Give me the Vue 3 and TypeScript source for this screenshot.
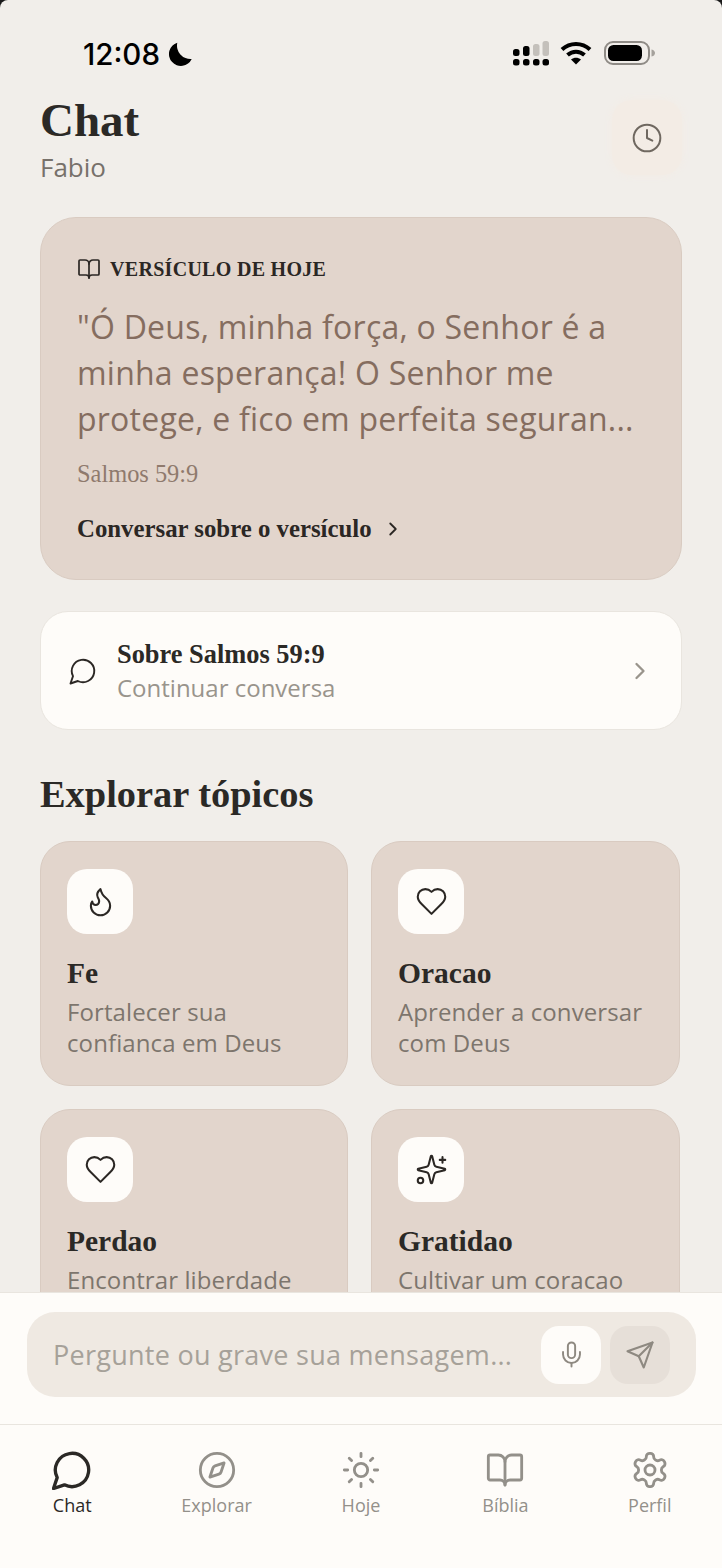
<script setup lang="ts">
interface Topic {
  title: string;
  desc: string;
  icon: "flame" | "heart" | "sparkles";
}

const topics: Topic[] = [
  { title: "Fe", desc: "Fortalecer sua confianca em Deus", icon: "flame" },
  { title: "Oracao", desc: "Aprender a conversar com Deus", icon: "heart" },
  { title: "Perdao", desc: "Encontrar liberdade no perdao", icon: "heart" },
  { title: "Gratidao", desc: "Cultivar um coracao agradecido", icon: "sparkles" },
];

const navItems = [
  { label: "Chat", icon: "chat", active: true },
  { label: "Explorar", icon: "compass", active: false },
  { label: "Hoje", icon: "sun", active: false },
  { label: "Bíblia", icon: "book", active: false },
  { label: "Perfil", icon: "gear", active: false },
];
</script>

<template>
  <div class="phone">
    <header class="status">
      <div class="time">
        <span>12:08</span>
        <svg class="moon" viewBox="0 0 24 24"><path d="M9.5 1.5A11 11 0 1 0 22.8 16.6 12.5 12.5 0 0 1 9.500 1.500Z" fill="#000" /></svg>
      </div>
      <div class="status-right">
        <svg width="36" height="25" viewBox="0 0 36 25">
          <g fill="#000">
            <rect x="0" y="8" width="6.500" height="7" rx="2.500" />
            <rect x="10" y="5" width="6.500" height="10" rx="2.500" />
            <rect x="0" y="18" width="6.500" height="6.500" rx="2.500" />
            <rect x="10" y="18" width="6.500" height="6.500" rx="2.500" />
            <rect x="20" y="18" width="6.500" height="6.500" rx="2.500" />
            <rect x="29.500" y="18" width="6.500" height="6.500" rx="2.500" />
          </g>
          <g fill="#c4c0bb">
            <rect x="20" y="3" width="6.500" height="12" rx="2.500" />
            <rect x="29.500" y="0" width="6.500" height="15" rx="2.500" />
          </g>
        </svg>
        <svg class="wifi" width="32" height="24" viewBox="0 0 32 24" fill="none" stroke="#000" stroke-width="4">
          <path d="M2 8.500C10 1 22 1 30 8.500" />
          <path d="M7.500 14C12.500 9.500 19.500 9.500 24.500 14" />
          <path d="M16 23.500 11 18.500C14 16 18 16 21 18.500Z" fill="#000" stroke="none" />
        </svg>
        <svg width="51" height="24" viewBox="0 0 51 24">
          <rect x="1" y="1" width="44" height="22" rx="8" fill="none" stroke="#8f8b86" stroke-width="2" />
          <rect x="4" y="4" width="34" height="16" rx="5.500" fill="#000" />
          <path d="M47.500 8.500C50 9 51 10.500 51 12S50 15 47.500 15.500Z" fill="#a5a19c" />
        </svg>
      </div>
    </header>

    <main class="content">
      <section class="title-row">
        <div>
          <h1>Chat</h1>
          <p class="user">Fabio</p>
        </div>
        <button class="history" type="button" aria-label="Histórico">
          <svg width="32" height="32" viewBox="0 0 24 24" fill="none" stroke="#6f6860" stroke-width="1.500" stroke-linecap="round" stroke-linejoin="round">
            <circle cx="12" cy="12" r="10" />
            <path d="M12 6v6l4 2" />
          </svg>
        </button>
      </section>

      <section class="verse">
        <div class="verse-label">
          <svg width="24" height="24" viewBox="0 0 24 24" fill="none" stroke="#2b2724" stroke-width="1.700" stroke-linecap="round" stroke-linejoin="round">
            <path d="M12 7v14" />
            <path d="M3 18a1 1 0 0 1-1-1V4a1 1 0 0 1 1-1h5a4 4 0 0 1 4 4 4 4 0 0 1 4-4h5a1 1 0 0 1 1 1v13a1 1 0 0 1-1 1h-6a3 3 0 0 0-3 3 3 3 0 0 0-3-3z" />
          </svg>
          <span>VERSÍCULO DE HOJE</span>
        </div>
        <p class="quote">"Ó Deus, minha força, o Senhor é a minha esperança! O Senhor me protege, e fico em perfeita seguran...</p>
        <p class="reference">Salmos 59:9</p>
        <a class="verse-link">
          <span>Conversar sobre o versículo</span>
          <svg width="22" height="22" viewBox="0 0 24 24" fill="none" stroke="#2b2724" stroke-width="2" stroke-linecap="round" stroke-linejoin="round"><path d="m9 18 6-6-6-6" /></svg>
        </a>
      </section>

      <section class="resume">
        <svg width="30" height="30" viewBox="0 0 24 24" fill="none" stroke="#2b2724" stroke-width="1.500" stroke-linecap="round" stroke-linejoin="round">
          <path d="M7.900 20A9 9 0 1 0 4 16.100L2 22Z" />
        </svg>
        <div class="resume-text">
          <strong>Sobre Salmos 59:9</strong>
          <span>Continuar conversa</span>
        </div>
        <svg width="28" height="28" viewBox="0 0 24 24" fill="none" stroke="#99948c" stroke-width="2" stroke-linecap="round" stroke-linejoin="round"><path d="m9 18 6-6-6-6" /></svg>
      </section>

      <h2>Explorar tópicos</h2>
      <section class="topics">
        <article v-for="topic in topics" :key="topic.title" class="topic">
          <div class="topic-icon">
            <svg width="33" height="33" viewBox="0 0 24 24" fill="none" stroke="#2b2724" stroke-width="1.500" stroke-linecap="round" stroke-linejoin="round">
              <path v-if="topic.icon === 'flame'" d="M8.500 14.500A2.500 2.500 0 0 0 11 12c0-1.380-.5-2-1-3-1.072-2.143-.224-4.054 2-6 .5 2.500 2 4.900 4 6.500 2 1.600 3 3.500 3 5.500a7 7 0 1 1-14 0c0-1.153.433-2.294 1-3a2.500 2.500 0 0 0 2.500 2.500z" />
              <path v-else-if="topic.icon === 'heart'" d="M19 14c1.490-1.460 3-3.210 3-5.500A5.500 5.500 0 0 0 16.500 3c-1.760 0-3 .5-4.500 2-1.500-1.500-2.740-2-4.500-2A5.500 5.500 0 0 0 2 8.500c0 2.300 1.500 4.050 3 5.500l7 7Z" />
              <template v-else>
                <path d="M9.937 15.500A2 2 0 0 0 8.500 14.063l-6.135-1.582a.5.5 0 0 1 0-.962L8.500 9.936A2 2 0 0 0 9.937 8.500l1.582-6.135a.5.5 0 0 1 .963 0L14.063 8.500A2 2 0 0 0 15.500 9.937l6.135 1.581a.5.5 0 0 1 0 .964L15.500 14.063a2 2 0 0 0-1.437 1.437l-1.582 6.135a.5.5 0 0 1-.963 0z" />
                <path d="M20 3v4M22 5h-4" />
                <circle cx="4" cy="20" r="2" />
              </template>
            </svg>
          </div>
          <h3>{{ topic.title }}</h3>
          <p>{{ topic.desc }}</p>
        </article>
      </section>
    </main>

    <section class="composer">
      <div class="composer-box">
        <span class="placeholder">Pergunte ou grave sua mensagem...</span>
        <button class="mic" type="button" aria-label="Gravar">
          <svg width="29" height="29" viewBox="0 0 24 24" fill="none" stroke="#8e8981" stroke-width="1.600" stroke-linecap="round" stroke-linejoin="round">
            <path d="M12 2a3 3 0 0 0-3 3v7a3 3 0 0 0 6 0V5a3 3 0 0 0-3-3Z" />
            <path d="M19 10v2a7 7 0 0 1-14 0v-2" />
            <path d="M12 19v3" />
          </svg>
        </button>
        <button class="send" type="button" aria-label="Enviar">
          <svg width="30" height="30" viewBox="0 0 24 24" fill="none" stroke="#8e8981" stroke-width="1.700" stroke-linecap="round" stroke-linejoin="round">
            <path d="m22 2-7 20-4-9-9-4Z" />
            <path d="M22 2 11 13" />
          </svg>
        </button>
      </div>
    </section>

    <nav class="tabs">
      <div v-for="item in navItems" :key="item.label" class="tab" :class="{ active: item.active }">
        <svg width="40" height="40" :viewBox="item.icon === 'chat' ? '1.200 1.200 21.600 21.600' : '0 0 24 24'" fill="none" stroke="currentColor" :stroke-width="item.active ? 1.800 : 1.700" stroke-linecap="round" stroke-linejoin="round">
          <path v-if="item.icon === 'chat'" d="M7.900 20A9 9 0 1 0 4 16.100L2 22Z" />
          <template v-else-if="item.icon === 'compass'">
            <circle cx="12" cy="12" r="10" />
            <path d="m16.240 7.760-1.804 5.411a2 2 0 0 1-1.265 1.265L7.760 16.240l1.804-5.411a2 2 0 0 1 1.265-1.265z" />
          </template>
          <template v-else-if="item.icon === 'sun'">
            <circle cx="12" cy="12" r="4" />
            <path d="M12 2v2M12 20v2M4.930 4.930l1.410 1.410M17.660 17.660l1.410 1.410M2 12h2M20 12h2M6.340 17.660l-1.410 1.410M19.070 4.930l-1.410 1.410" />
          </template>
          <template v-else-if="item.icon === 'book'">
            <path d="M12 7v14" />
            <path d="M3 18a1 1 0 0 1-1-1V4a1 1 0 0 1 1-1h5a4 4 0 0 1 4 4 4 4 0 0 1 4-4h5a1 1 0 0 1 1 1v13a1 1 0 0 1-1 1h-6a3 3 0 0 0-3 3 3 3 0 0 0-3-3z" />
          </template>
          <template v-else>
            <path d="M12.220 2h-.44a2 2 0 0 0-2 2v.18a2 2 0 0 1-1 1.730l-.43.25a2 2 0 0 1-2 0l-.15-.08a2 2 0 0 0-2.730.73l-.22.38a2 2 0 0 0 .73 2.730l.15.1a2 2 0 0 1 1 1.720v.51a2 2 0 0 1-1 1.740l-.15.09a2 2 0 0 0-.73 2.730l.22.38a2 2 0 0 0 2.730.73l.15-.08a2 2 0 0 1 2 0l.43.25a2 2 0 0 1 1 1.730V20a2 2 0 0 0 2 2h.44a2 2 0 0 0 2-2v-.18a2 2 0 0 1 1-1.730l.43-.25a2 2 0 0 1 2 0l.15.08a2 2 0 0 0 2.730-.73l.22-.39a2 2 0 0 0-.73-2.730l-.15-.08a2 2 0 0 1-1-1.740v-.5a2 2 0 0 1 1-1.740l.15-.09a2 2 0 0 0 .73-2.730l-.22-.38a2 2 0 0 0-2.730-.73l-.15.08a2 2 0 0 1-2 0l-.43-.25a2 2 0 0 1-1-1.730V4a2 2 0 0 0-2-2z" />
            <circle cx="12" cy="12" r="3" />
          </template>
        </svg>
        <span>{{ item.label }}</span>
      </div>
    </nav>
  </div>
</template>

<style>
html,
body {
  background: #1a1a1a;
}
</style>

<style scoped>
.phone {
  width: 722px;
  height: 1568px;
  display: flex;
  flex-direction: column;
  overflow: hidden;
  border-radius: 8px 8px 0 0;
  background: #f1eeea;
  color: #2b2926;
  font-family: "Open Sans", "Noto Sans", sans-serif;
}

.status {
  height: 90px;
  flex: none;
  box-sizing: border-box;
  display: flex;
  justify-content: space-between;
  padding: 38px 67px 0 83px;
}

.time {
  display: flex;
  align-items: flex-start;
  gap: 7px;
  font-family: Inter, sans-serif;
  font-size: 29.500px;
  line-height: 32px;
  font-weight: 500;
  color: #000;
}

.moon {
  width: 26px;
  height: 26px;
  margin-top: 3px;
}

.status-right {
  display: flex;
  align-items: flex-start;
  gap: 12px;
  padding-top: 3px;
}

.status-right svg:first-child {
  margin-right: -1px;
}

.content {
  flex: 1;
  min-height: 0;
  overflow: hidden;
  padding: 0 42px 0 40px;
}

.title-row {
  display: flex;
  justify-content: space-between;
  align-items: flex-start;
  height: 127px;
  padding-top: 3px;
  box-sizing: border-box;
  margin-right: -2px;
}

h1 {
  margin: 0;
  font-family: "Liberation Serif", serif;
  font-size: 47px;
  line-height: 54px;
  font-weight: 700;
}

.user {
  margin: 2px 0 0;
  font-size: 26px;
  line-height: 36px;
  color: #77716a;
}

.history {
  width: 70px;
  height: 75px;
  margin-top: 7px;
  border: 0;
  border-radius: 20px;
  background: #f3ece5;
  display: flex;
  align-items: center;
  justify-content: center;
  box-shadow: 0 0 8px #f3ece5;
  padding: 0;
}

.verse {
  height: 363px;
  box-sizing: border-box;
  margin-right: -2px;
  padding: 36px 36px 0;
  background: #e2d5cc;
  border: 1px solid #d9cbc1;
  border-radius: 36px;
}

.verse-label {
  display: flex;
  align-items: center;
  gap: 9px;
  height: 30px;
  font-family: "Liberation Serif", serif;
  font-size: 20px;
  font-weight: 700;
  letter-spacing: 0.3px;
  color: #2b2724;
}

.quote {
  margin: 20px 0 0;
  font-size: 32px;
  line-height: 46px;
  letter-spacing: 0.23px;
  color: #856d5f;
}

.reference {
  margin: 16px 0 0;
  font-family: "Liberation Serif", serif;
  font-size: 24.400px;
  line-height: 32px;
  color: #8f7a6d;
}

.verse-link {
  display: flex;
  align-items: center;
  gap: 10px;
  margin-top: 23px;
  font-family: "Liberation Serif", serif;
  font-size: 24.800px;
  line-height: 32px;
  font-weight: 700;
  color: #2b2724;
}

.resume {
  height: 119px;
  box-sizing: border-box;
  margin: 31px -2px 0 0;
  padding: 0 27px 0 27px;
  display: flex;
  align-items: center;
  gap: 19px;
  background: #fefcf9;
  border: 1px solid #e9e5df;
  border-radius: 28px;
}

.resume-text {
  flex: 1;
  display: flex;
  flex-direction: column;
  gap: 1px;
  padding-top: 2px;
}

.resume-text strong {
  font-family: "Liberation Serif", serif;
  font-size: 26.400px;
  line-height: 32px;
}

.resume-text span {
  font-size: 24px;
  line-height: 34px;
  color: #99948c;
}

h2 {
  margin: 42px 0 25px;
  font-family: "Liberation Serif", serif;
  font-size: 38.400px;
  line-height: 44px;
  font-weight: 700;
}

.topics {
  display: grid;
  grid-template-columns: 308px 309px;
  gap: 23px;
}

.topic {
  height: 245px;
  box-sizing: border-box;
  padding: 27px 26px 0;
  background: #e2d5cc;
  border: 1px solid #d9cbc1;
  border-radius: 30px;
}

.topic-icon {
  width: 66px;
  height: 65px;
  border-radius: 20px;
  background: #fefcf9;
  display: flex;
  align-items: center;
  justify-content: center;
}

h3 {
  margin: 22px 0 0;
  font-family: "Liberation Serif", serif;
  font-size: 29.500px;
  line-height: 34px;
  font-weight: 700;
}

.topic p {
  margin: 6px 0 0;
  font-size: 24px;
  line-height: 31px;
  letter-spacing: 0.1px;
  color: #7d756d;
}

.composer {
  height: 133px;
  flex: none;
  box-sizing: border-box;
  padding: 19px 26px 0 27px;
  background: #fefcf9;
  border-top: 1px solid #e9e5df;
  border-bottom: 1px solid #e9e5df;
}

.composer-box {
  height: 85px;
  box-sizing: border-box;
  display: flex;
  align-items: center;
  padding: 0 26px;
  background: #efe9e2;
  border-radius: 28px;
}

.placeholder {
  flex: 1;
  font-size: 27px;
  letter-spacing: 0.27px;
  color: #a6a199;
  white-space: nowrap;
}

.mic,
.send {
  width: 60px;
  height: 58px;
  padding: 0;
  border: 0;
  border-radius: 18px;
  display: flex;
  align-items: center;
  justify-content: center;
}

.mic {
  background: #fefcf9;
  margin-right: 9px;
}

.send {
  background: #e6dfd8;
}

.tabs {
  flex: none;
  height: 143px;
  box-sizing: border-box;
  display: grid;
  grid-template-columns: repeat(5, 1fr);
  padding-top: 25px;
  background: #fefcf9;
}

.tab {
  display: flex;
  flex-direction: column;
  align-items: center;
  color: #93908a;
}

.tab.active {
  color: #2b2926;
}

.tab span {
  margin-top: 3px;
  font-size: 18px;
  line-height: 24px;
}
</style>
